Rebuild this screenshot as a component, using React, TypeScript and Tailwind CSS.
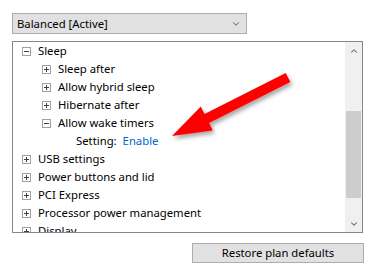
import { ChevronDown, ChevronUp } from "lucide-react";

type Row = { level: number; label: string; open?: boolean; setting?: string };

const ROWS: Row[] = [
  { level: 0, label: "Sleep", open: true },
  { level: 1, label: "Sleep after" },
  { level: 1, label: "Allow hybrid sleep" },
  { level: 1, label: "Hibernate after" },
  { level: 1, label: "Allow wake timers", open: true },
  { level: 2, label: "Setting:", setting: "Enable" },
  { level: 0, label: "USB settings" },
  { level: 0, label: "Power buttons and lid" },
  { level: 0, label: "PCI Express" },
  { level: 0, label: "Processor power management" },
  { level: 0, label: "Display" },
];

function Toggle({ open }: { open?: boolean }) {
  return (
    <span className="relative w-[9px] h-[9px] border border-[#a0a0a0] bg-white shrink-0">
      <span className="absolute left-[1px] top-[3px] w-[5px] h-px bg-[#404040]" />
      {!open && <span className="absolute left-[3px] top-[1px] w-px h-[5px] bg-[#404040]" />}
    </span>
  );
}

function TreeRow({ row }: { row: Row }) {
  if (row.setting) {
    return (
      <div className="h-[18px] flex items-center pl-[63px] whitespace-nowrap">
        <span>{row.label}</span>
        <span className="ml-[6px] text-[#0066cc]">{row.setting}</span>
      </div>
    );
  }
  return (
    <div className={`h-[18px] flex items-center gap-[7px] whitespace-nowrap ${row.level === 0 ? "pl-[9px]" : "pl-[29px]"}`}>
      <Toggle open={row.open} />
      <span>{row.label}</span>
    </div>
  );
}

function Arrow() {
  return (
    <svg className="absolute left-0 top-0 pointer-events-none" width="373" height="276">
      <defs>
        <filter id="sh" x="-20%" y="-20%" width="140%" height="140%">
          <feDropShadow dx="2" dy="3" stdDeviation="2" floodColor="#000" floodOpacity="0.35" />
        </filter>
      </defs>
      <polygon
        filter="url(#sh)"
        fill="#ff0000"
        points="172,136 200.8,106.5 204.5,114 285.7,73 290.3,82 209.1,123 212.8,130.5"
      />
    </svg>
  );
}

export default function App() {
  return (
    <div className="relative w-[373px] h-[276px] bg-white pt-[13px] pl-[12px] text-[11.3px] text-black font-['Noto_Sans',sans-serif] leading-none">
      {/* plan dropdown */}
      <div className="w-[235px] h-[21px] bg-[#e1e1e1] border border-[#adadad] flex items-center justify-between pl-[4px] pr-[5px]">
        <span>Balanced [Active]</span>
        <ChevronDown className="w-[10px] h-[10px] text-[#404040]" strokeWidth={2} />
      </div>

      {/* settings tree */}
      <div className="mt-[7px] w-[351px] h-[192px] border border-[#828790] flex bg-white">
        <div className="flex-1 overflow-hidden">
          {ROWS.map((r, i) => (
            <TreeRow key={i} row={r} />
          ))}
        </div>
        <div className="w-[17px] bg-[#f0f0f0] flex flex-col">
          <div className="h-[17px] flex items-center justify-center">
            <ChevronUp className="w-[10px] h-[10px] text-[#606060]" strokeWidth={2.5} />
          </div>
          <div className="flex-1 flex flex-col">
            <div className="h-[52px]" />
            <div className="h-[87px] mx-[1px] bg-[#cdcdcd]" />
          </div>
          <div className="h-[17px] flex items-center justify-center">
            <ChevronDown className="w-[10px] h-[10px] text-[#606060]" strokeWidth={2.5} />
          </div>
        </div>
      </div>

      <button className="mt-[10px] ml-[180px] w-[172px] h-[20px] bg-[#e1e1e1] border border-[#adadad] flex items-center justify-center">
        Restore plan defaults
      </button>

      <Arrow />
    </div>
  );
}
